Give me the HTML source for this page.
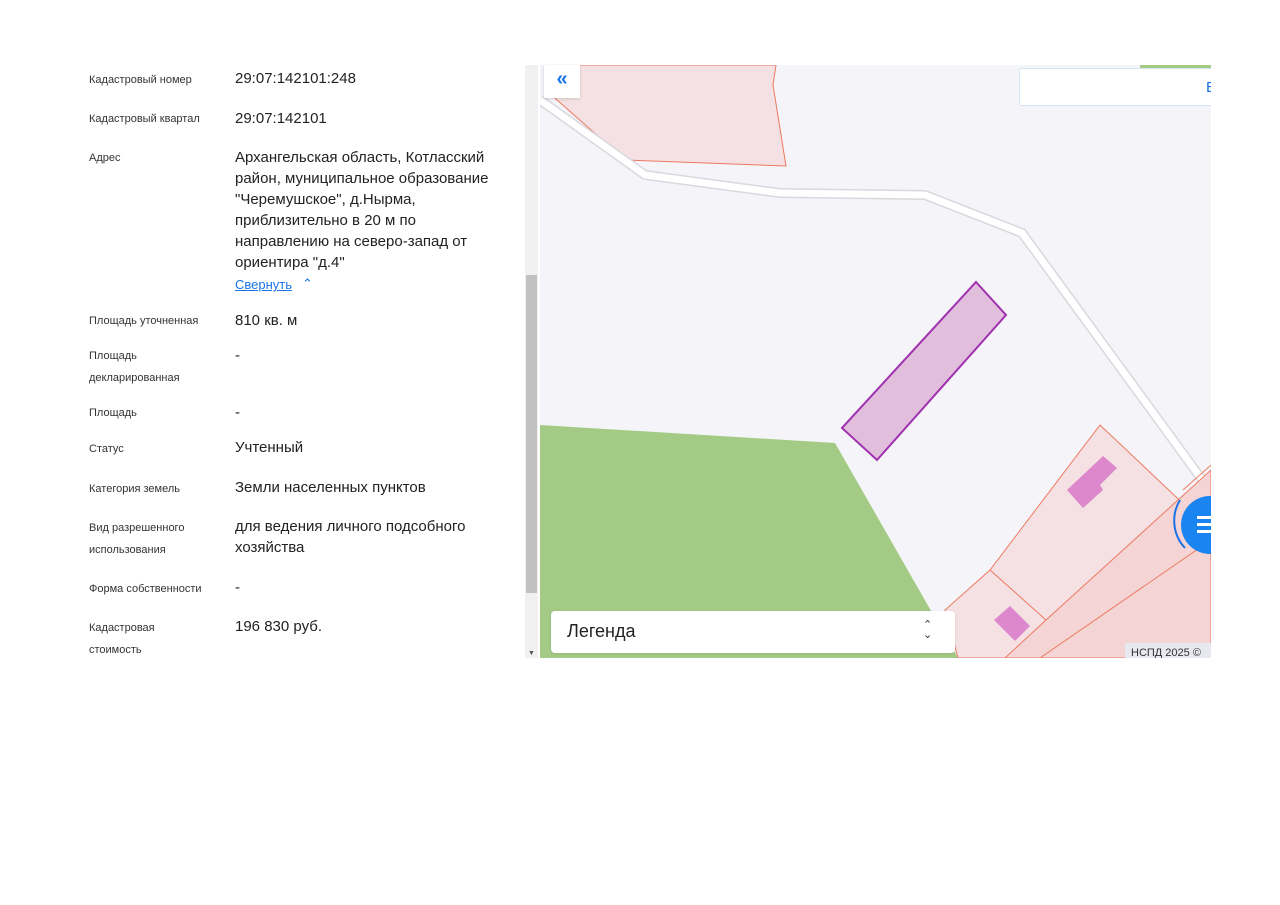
<!DOCTYPE html>
<html><head><meta charset="utf-8"><style>
body{margin:0;width:1280px;height:905px;background:#fff;position:relative;overflow:hidden;font-family:"Liberation Sans",sans-serif}
.l{position:absolute;left:89px;font-size:11px;color:#333;line-height:22px}
.v{position:absolute;left:235px;font-size:15px;color:#222;line-height:21px}
</style></head><body>
<div class="l" style="top:69px">Кадастровый номер</div><div class="v" style="top:68px">29:07:142101:248</div>
<div class="l" style="top:108px">Кадастровый квартал</div><div class="v" style="top:108px">29:07:142101</div>
<div class="l" style="top:147px">Адрес</div>
<div class="v" style="top:147px;width:275px">Архангельская область, Котласский район, муниципальное образование "Черемушское", д.Нырма, приблизительно в 20 м по направлению на северо-запад от ориентира "д.4"</div>
<div style="position:absolute;left:235px;top:277px;font-size:13px;color:#1a73e8;text-decoration:underline">Свернуть</div>
<div style="position:absolute;left:302px;top:276px;font-size:13px;color:#1a73e8">&#8963;</div>
<div class="l" style="top:310px">Площадь уточненная</div><div class="v" style="top:310px">810 кв. м</div>
<div class="l" style="top:345px">Площадь<br>декларированная</div><div class="v" style="top:345px">-</div>
<div class="l" style="top:402px">Площадь</div><div class="v" style="top:402px">-</div>
<div class="l" style="top:438px">Статус</div><div class="v" style="top:437px">Учтенный</div>
<div class="l" style="top:478px">Категория земель</div><div class="v" style="top:477px">Земли населенных пунктов</div>
<div class="l" style="top:517px">Вид разрешенного<br>использования</div><div class="v" style="top:516px;width:280px">для ведения личного подсобного хозяйства</div>
<div class="l" style="top:578px">Форма собственности</div><div class="v" style="top:577px">-</div>
<div class="l" style="top:617px">Кадастровая<br>стоимость</div><div class="v" style="top:616px">196 830 руб.</div>
<div style="position:absolute;left:525px;top:65px;width:13px;height:593px;background:#f1f1f1"></div>
<div style="position:absolute;left:526px;top:275px;width:11px;height:318px;background:#c1c1c1"></div>
<div style="position:absolute;left:528px;top:650px;font-size:7px;color:#555">▼</div>
<svg style="position:absolute;left:540px;top:65px" width="671" height="593" viewBox="540 65 671 593">
<rect x="540" y="65" width="671" height="593" fill="#f4f4f9"/>
<rect x="1140" y="65" width="71" height="3" fill="#a3cb85"/>
<polygon points="548,65 776,65 773,85 786,166 625,160 548,92" fill="#f5e1e3" stroke="#ec7a60" stroke-width="1"/>
<polyline points="540,100 645,175 780,193 925,195 1022,233 1211,492" fill="none" stroke="#d8d8de" stroke-width="10"/>
<polyline points="540,100 645,175 780,193 925,195 1022,233 1211,492" fill="none" stroke="#fff" stroke-width="7"/>
<polygon points="540,425 835,443 958,658 540,658" fill="#a3cb85"/>
<polygon points="1100,425 1211,530 1211,658 958,658 945,610 990,570" fill="#f5e1e3" stroke="#ec7a60"/>
<polygon points="1046,620 1211,470 1211,658 1005,658" fill="#f4d4d4" stroke="#ec7a60"/>
<line x1="990" y1="570" x2="1046" y2="620" stroke="#ec7a60"/>
<line x1="1040" y1="658" x2="1211" y2="540" stroke="#ec7a60"/>
<line x1="1183" y1="490" x2="1211" y2="465" stroke="#ec7a60"/>
<polygon points="976,282 1006,315 877,460 842,428" fill="#e2bedd" stroke="#a030b0" stroke-width="2"/>
<polygon points="1067,490 1103,456 1117,468 1100,485 1103,490 1083,508" fill="#dd88cc"/>
<polygon points="994,620 1010,606 1030,626 1015,641" fill="#dd88cc"/>
<rect x="1125" y="643" width="86" height="15" fill="#e8e8f0"/>
<text x="1131" y="656" font-family="Liberation Sans" font-size="11" fill="#333">НСПД 2025 ©</text>
<path d="M1180,500 A40,40 0 0 0 1185,548" fill="none" stroke="#1a73e8" stroke-width="2"/>
<circle cx="1210" cy="525" r="29" fill="#1a85f0"/>
<rect x="1197" y="516" width="14" height="3" fill="#fff"/><rect x="1197" y="523" width="14" height="3" fill="#fff"/><rect x="1197" y="530" width="14" height="3" fill="#fff"/>
</svg>
<div style="position:absolute;left:544px;top:65px;width:36px;height:33px;background:#fff;box-shadow:0 1px 3px rgba(0,0,0,.15);color:#1a73e8;font-size:20px;font-weight:bold;text-align:center;line-height:28px">«</div>
<div style="position:absolute;left:1019px;top:68px;width:200px;height:38px;background:#fff;border:1px solid #d6e4f5;border-radius:3px;box-sizing:border-box;color:#1a73e8;font-size:15px;line-height:38px;padding-left:186px">E</div>
<div style="position:absolute;left:1211px;top:60px;width:69px;height:605px;background:#fff"></div>
<div style="position:absolute;left:551px;top:611px;width:404px;height:42px;background:#fff;border-radius:4px;box-shadow:0 1px 3px rgba(0,0,0,.1)">
<span style="position:absolute;left:16px;top:10px;font-size:18px;color:#222">Легенда</span>
<span style="position:absolute;left:372px;top:9px;font-size:11px;color:#333;line-height:10px;text-align:center">&#8963;<br>&#8964;</span></div>
</body></html>
